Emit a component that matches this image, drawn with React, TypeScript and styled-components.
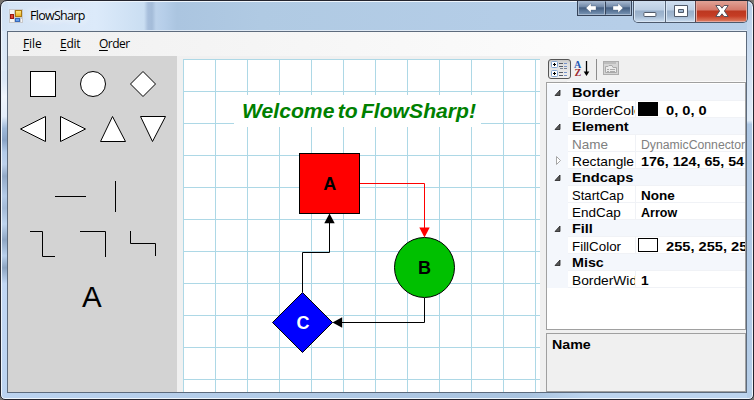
import React from "react";
import styled, { createGlobalStyle } from "styled-components";

const GlobalStyle = createGlobalStyle`
  body { margin: 0; background: #77736f; overflow: hidden; }
  * { box-sizing: border-box; }
`;

const Window = styled.div`
  width: 754px;
  height: 400px;
  display: flex;
  flex-direction: column;
  border: 1px solid #23242e;
  border-radius: 7px 7px 5px 5px;
  box-shadow: inset 0 0 0 1px #eef5fc;
  padding: 0 6px 6px;
  background:
    linear-gradient(90deg, #dfebf8, transparent) 1px 30px / 6px 40px no-repeat,
    linear-gradient(#cfe0f3 0, #dce8f7 20%, #f0f5fc 24%, #e3edfa 29%, #9fb9d9 32%, #8aa4c7 35%, #b3cbe9 38%,
      #bdd1ec 41%, #92a9c7 44%, #b4cbe8 49%, #a3bad7 52%, #bfd5ef 56%, #8ea6c4 60%, #b9d0ec 64%, #8ca4c1 67%, #c1d7f4 71%, #bbd3f0 100%) 1px 0 / 6px 100% no-repeat,
    linear-gradient(#b9cfe9 0, #d6e4f4 20%, #e0ecf8 30%, #acc6e3 31%, #b6cee8 100%) 746px 0 / 6px 100% no-repeat,
    linear-gradient(90deg, #bbd3f0, #a9c3df 70%, #bdd4ee 78%, #bdd4ee) 0 391px / 100% 8px no-repeat,
    linear-gradient(90deg, #d5e4f5 0, #dceafa 95px, #cadef2 143px, #a8bfdc 147px, #a4bcd9 151px, #bcd2eb 155px,
      #b6cee9 163px, #abc5e0 176px, #b0cae3 260px, #b4cde7 500px, #b8cfe9 100%);
`;

const TitleBar = styled.header`
  height: 30px;
  flex: none;
  display: flex;
  align-items: flex-start;
`;

const AppIcon = styled.svg`
  width: 14px;
  height: 14px;
  margin: 8px 7px 0 2px;
`;

const Title = styled.div`
  flex: 1;
  padding-top: 7px;
  font: 12px/16px "Open Sans", sans-serif;
  letter-spacing: -0.9px;
  font-size: 12.5px;
  color: #000;
  text-shadow: 0 0 8px #fff, 0 0 8px #fff;
`;

const TitleText = styled.span`
  letter-spacing: -0.72px;
`;

const NavButtons = styled.div`
  display: flex;
  border: 1px solid #36445a;
  border-top: 0;
  width: 55px;
  height: 15px;
  margin-right: 1px;
`;

const NavButton = styled.div`
  flex: 1;
  border: 1px solid #a6b8ce;
  background: linear-gradient(#9fb2cb 0, #6f87a6 42%, #435d80 48%, #7490b0 100%);
  & + & { border-left-color: #36445a; }
  svg { display: block; margin: 0 auto; }
`;

const CaptionButtons = styled.div`
  display: flex;
  width: 115px;
  height: 22px;
  margin-right: -1px;
  border: 1px solid #4c596c;
  border-top: 0;
  border-radius: 0 0 5px 5px;
  overflow: hidden;
`;

const CaptionButton = styled.div<{ $w: number; $close?: boolean }>`
  width: ${(p) => p.$w}px;
  border: 1px solid ${(p) => (p.$close ? "#e6a79c" : "#d8e5f3")};
  border-top: 0;
  background: ${(p) =>
    p.$close
      ? "linear-gradient(#e0a296 0, #d4796a 45%, #bc3720 50%, #c53c24 75%, #da765b 100%)"
      : "linear-gradient(#cfdeef 0, #bccee3 45%, #98afca 50%, #a3b9d2 75%, #c5d8ec 100%)"};
  box-shadow: ${(p) => (p.$close ? "-1px 0 #61444b" : "-1px 0 #59687c")};
  margin-left: 1px;
  &:first-child { margin-left: 0; }
  svg { display: block; margin: 0 auto; }
`;

const Client = styled.div`
  flex: 1;
  min-height: 0;
  border: 1px solid #5d6b7d;
  box-shadow: 0 -1px 0 #dfe9f4;
  background: #f0f0f0;
  display: flex;
  flex-direction: column;
`;

const MenuBar = styled.nav`
  height: 24px;
  flex: none;
  display: flex;
  padding: 4px 15px 0;
  background: linear-gradient(90deg, #f0f0f0, #fcfcfc 80%);
  font: 12px/16px "Open Sans", sans-serif;
  color: #000;
`;

const MenuItem = styled.div<{ $w: number; $track: number }>`
  width: ${(p) => p.$w}px;
  letter-spacing: ${(p) => p.$track}px;
  white-space: nowrap;
  u { text-underline-offset: 2px; text-decoration-thickness: 1px; text-decoration-skip-ink: none; }
`;

const Workspace = styled.main`
  flex: 1;
  min-height: 0;
  display: flex;
`;

const Toolbox = styled.aside`
  width: 169px;
  background: #d3d3d3;
  svg { display: block; }
`;

const Canvas = styled.section`
  width: 357px;
  margin: 3px 6px 0;
  background: #fff;
  overflow: hidden;
  svg { display: block; }
`;

const Properties = styled.aside`
  width: 200px;
  display: flex;
  flex-direction: column;
`;

const Tools = styled.div`
  height: 26px;
  flex: none;
  svg { display: block; }
`;

const Grid = styled.div`
  height: 248px;
  flex: none;
  border: 1px solid #a0a0a0;
  background: #fff;
  padding-top: 1px;
  font-family: "Liberation Sans", sans-serif;
  color: #000;
`;

const Row = styled.div<{ $header?: boolean }>`
  height: 17px;
  display: grid;
  grid-template-columns: 21px 67px 1fr;
  background: ${(p) => (p.$header ? "#f4f7fc" : "#fff")};
  border-bottom: 1px solid #f0f2f6;
`;

const Gutter = styled.div`
  background: #f4f7fc;
  height: 17px;
  svg { display: block; }
`;

const Category = styled.div`
  grid-column: 2 / 4;
  padding-left: 4px;
  font-weight: bold;
  font-size: 13.5px;
  line-height: 18px;
`;

const Label = styled.div<{ $dim?: boolean }>`
  overflow: hidden;
  white-space: nowrap;
  padding-left: 4px;
  font-size: 13.5px;
  line-height: 19px;
  height: 17px;
  color: ${(p) => (p.$dim ? "#808080" : "#000")};
`;

const Value = styled.div<{ $dim?: boolean }>`
  display: flex;
  overflow: hidden;
  height: 17px;
  border-left: 1px solid #f0f2f6;
  padding-left: ${(p) => (p.$dim ? 5 : 2)}px;
  font-size: 12.5px;
  line-height: 20px;
  white-space: pre;
  color: ${(p) => (p.$dim ? "#808080" : "#000")};
  font-weight: ${(p) => (p.$dim ? "normal" : "bold")};
`;

const Swatch = styled.span<{ $color: string }>`
  flex: none;
  width: 20px;
  height: 14px;
  margin: 1px 5px 0 0;
  border: 1px solid #000;
  background: ${(p) => p.$color};
`;

const Stretch = styled.span<{ $sx: number }>`
  display: inline-block;
  flex: none;
  transform: scaleX(${(p) => p.$sx});
  transform-origin: left center;
`;

const ValueText = styled(Stretch)`
  margin-left: 3px;
`;

const Help = styled.div`
  height: 59px;
  margin-top: 3px;
  border: 1px solid #a0a0a0;
  padding: 3px 5px;
  font: bold 13.3px/16px "Liberation Sans", sans-serif;
  color: #000;
`;

type Prop = {
  name: string;
  header?: boolean;
  sx: number;
  value?: string;
  vsx?: number;
  swatch?: string;
  dim?: boolean;
  expandable?: boolean;
};

const rows: Prop[] = [
  { name: "Border", header: true, sx: 1.08 },
  { name: "BorderColor", sx: 1.02, value: "0, 0, 0", vsx: 1.17, swatch: "#000" },
  { name: "Element", header: true, sx: 1.08 },
  { name: "Name", sx: 1, value: "DynamicConnector", vsx: 0.98, dim: true },
  { name: "Rectangle", sx: 1.02, value: "176, 124, 65, 54", vsx: 1.14, expandable: true },
  { name: "Endcaps", header: true, sx: 1.09 },
  { name: "StartCap", sx: 0.97, value: "None", vsx: 1.08 },
  { name: "EndCap", sx: 1, value: "Arrow", vsx: 1.0 },
  { name: "Fill", header: true, sx: 1.07 },
  { name: "FillColor", sx: 0.99, value: "255, 255, 255", vsx: 1.17, swatch: "#fff" },
  { name: "Misc", header: true, sx: 1.06 },
  { name: "BorderWidth", sx: 1.02, value: "1", vsx: 1.1 },
];

function PropertyRow({ row }: { row: Prop }) {
  return (
    <Row $header={row.header}>
      <Gutter>
        <svg width="21" height="17">
          {row.header && <path d="M8 11.5 L13 6 V11.5 Z" fill="#595959" stroke="#222" strokeWidth=".8" />}
          {row.expandable && <path d="M9.5 4.5 L13.5 8.5 L9.5 12.5 Z" fill="#fff" stroke="#a6a6a6" />}
        </svg>
      </Gutter>
      {row.header ? (
        <Category><Stretch $sx={row.sx}>{row.name}</Stretch></Category>
      ) : (
        <>
          <Label $dim={row.dim}><Stretch $sx={row.sx}>{row.name}</Stretch></Label>
          <Value $dim={row.dim}>
            {row.swatch && <Swatch $color={row.swatch} />}
            {row.dim ? <Stretch $sx={row.vsx!}>{row.value}</Stretch> : <ValueText $sx={row.vsx!}>{row.value}</ValueText>}
          </Value>
        </>
      )}
    </Row>
  );
}

function ToolboxShapes() {
  return (
    <svg width="169" height="336" viewBox="8 56 169 336">
      <g fill="#fff" stroke="#000">
        <rect x="30.5" y="71.5" width="25" height="25" />
        <circle cx="93" cy="84" r="12.5" />
        <path d="M143 71.5 L155.5 84 L143 96.5 L130.5 84 Z" />
        <path d="M20.5 129 L45.5 116.5 V141.5 Z" />
        <path d="M85.5 129 L60.5 116.5 V141.5 Z" />
        <path d="M112.5 116.5 L125.5 141.5 H100.5 Z" />
        <path d="M140.5 116.5 H165.5 L152.5 141.5 Z" />
      </g>
      <g fill="none" stroke="#000">
        <path d="M55 196.5 H86 M115.5 181 V212" />
        <path d="M30 231.5 H42.5 V256.5 H55" />
        <path d="M80 231.5 H105.5 V257" />
        <path d="M130.5 231 V243.5 H155.5 V256" />
      </g>
      <text x="82" y="307" fontFamily="Liberation Sans, sans-serif" fontSize="29.5">A</text>
    </svg>
  );
}

function Diagram() {
  return (
    <svg width="357" height="333" viewBox="183 59 357 333">
      <g stroke="#add8e6">
        {Array.from({ length: 12 }, (_, i) => (
          <line key={`v${i}`} x1={183.5 + i * 32} x2={183.5 + i * 32} y1="59" y2="392" />
        ))}
        {Array.from({ length: 11 }, (_, i) => (
          <line key={`h${i}`} x1="183" x2="540" y1={59.5 + i * 32} y2={59.5 + i * 32} />
        ))}
      </g>
      <rect x="234" y="95" width="247" height="32" fill="#fff" />
      <g fontFamily="Liberation Sans, sans-serif" fontWeight="bold">
        <text x="242" y="118" fontSize="20.5" fontStyle="italic" fill="#008000" wordSpacing="-2.5" textLength="234" lengthAdjust="spacingAndGlyphs">
          Welcome to FlowSharp!
        </text>
        <rect x="299.5" y="153.5" width="60" height="60" fill="#f00" stroke="#000" />
        <circle cx="424.5" cy="267.5" r="30" fill="#00c000" stroke="#000" />
        <path d="M302.5 292.5 L332.5 322.5 L302.5 352.5 L272.5 322.5 Z" fill="#00f" stroke="#000" />
        <g fontSize="18" textAnchor="middle">
          <text x="329.7" y="190">A</text>
          <text x="424.5" y="274">B</text>
          <text x="303" y="329" fill="#fff">C</text>
        </g>
      </g>
      <path d="M360 183.5 H424.5 V229" fill="none" stroke="#f00" />
      <path d="M419.3 227.5 H429.7 L424.5 237.5 Z" fill="#f00" />
      <path d="M424.5 298 V322.5 H341" fill="none" stroke="#000" />
      <path d="M342.2 317.3 V327.7 L332.5 322.5 Z" />
      <path d="M302.5 292 V252.5 H329.5 V222" fill="none" stroke="#000" />
      <path d="M324.3 223.3 H334.7 L329.5 213.5 Z" />
    </svg>
  );
}

function PropertyTools() {
  return (
    <svg width="200" height="26" viewBox="546 56 200 26">
      <defs>
        <linearGradient id="pressed" x2="0" y2="1">
          <stop stopColor="#c4c4c4" />
          <stop offset=".25" stopColor="#dedede" />
          <stop offset="1" stopColor="#f0f0f0" />
        </linearGradient>
      </defs>
      <rect x="548.5" y="59.5" width="22" height="19" rx="2.5" fill="url(#pressed)" stroke="#555" />
      {[61, 70].map((y) => (
        <g key={y}>
          <rect x="551.5" y={y + 0.5} width="6" height="6" rx="1" fill="#fff" stroke="#82a5d0" />
          <path d={`M553 ${y + 3.5} h3 M554.5 ${y + 2} v3`} stroke="#000" />
          <path d={`M559 ${y + 2.5} h4 M559 ${y + 5.5} h4`} stroke="#555c68" />
          <path d={`M564 ${y + 2.5} h3 M564 ${y + 5.5} h3`} stroke="#7794c9" />
        </g>
      ))}
      <path d="M560 68.5 h3 M564 68.5 h3" stroke="#788191" />
      <g fontFamily="Liberation Serif, serif" fontWeight="bold" fontSize="10">
        <text x="574" y="68" fill="#2257b5">A</text>
        <text x="574.5" y="76.3" fill="#9e2a2f">Z</text>
      </g>
      <path d="M586.5 61 V74" stroke="#000" strokeWidth="1.3" />
      <path d="M583.7 71.5 H589.3 L586.5 76 Z" />
      <path d="M596.5 59 V80" stroke="#8d8d8d" />
      <rect x="603.5" y="61.5" width="15" height="13" fill="#d5d5d5" stroke="#adadad" />
      <path d="M604 63 H616" stroke="#bdbdbd" strokeWidth="2" />
      <path d="M605.5 66.5 H608 L609 65.5 H612 L613 67.5 H616.5 V72.5 H605.5 Z" fill="#ebebeb" stroke="#aaa" />
      <path d="M607 69.5 H609 M610 69.5 H615 M607 71.5 H609 M610 71.5 H615" stroke="#aaa" />
      <path d="M567 81.5 H746" stroke="#fafafa" />
    </svg>
  );
}

export default function App() {
  return (
    <>
      <GlobalStyle />
      <Window>
        <TitleBar>
          <AppIcon viewBox="0 0 14 14">
            <defs>
              <linearGradient id="gold" x2="0" y2="1"><stop stopColor="#ffe989" /><stop offset="1" stopColor="#e9ad17" /></linearGradient>
            </defs>
            <rect width="14" height="14" fill="#c8c9cc" />
            <path d="M1 1h4v4H1z M1 10h4v3H1z M12 10h1v3h-1z" fill="#f5f5f5" />
            <rect x="6.5" y="1.5" width="6" height="6" fill="url(#gold)" stroke="#aa7810" />
            <rect x="1.5" y="5.5" width="3" height="4" fill="#df4534" stroke="#9b1a12" />
            <rect x="6.5" y="9.5" width="4" height="3" fill="#65a0ee" stroke="#3768b9" />
          </AppIcon>
          <Title><TitleText>FlowSharp</TitleText></Title>
          <NavButtons>
            <NavButton>
              <svg width="14" height="12"><path d="M2 6 L7 1.3 V4 H12 V8 H7 V10.7 Z" fill="#fff" stroke="#3c506c" strokeWidth=".3" /></svg>
            </NavButton>
            <NavButton>
              <svg width="14" height="12"><path d="M12 6 L7 1.3 V4 H2 V8 H7 V10.7 Z" fill="#fff" stroke="#3c506c" strokeWidth=".3" /></svg>
            </NavButton>
          </NavButtons>
          <CaptionButtons>
            <CaptionButton $w={31}>
              <svg width="14" height="20"><rect x=".9" y="11.5" width="12" height="4" rx=".7" fill="#fff" stroke="#505a6a" /></svg>
            </CaptionButton>
            <CaptionButton $w={29}>
              <svg width="14" height="20">
                <path fillRule="evenodd" d="M.5 4.5 H13.5 V15.5 H.5 Z M4.5 8.5 H9.5 V11.5 H4.5 Z" fill="#fff" stroke="#505a6a" />
              </svg>
            </CaptionButton>
            <CaptionButton $w={51} $close>
              <svg width="14" height="20">
                <path d="M.8 4.5 H5 L7 7.2 L9 4.5 H13.2 L9.4 10 L13.2 15.5 H9 L7 12.8 L5 15.5 H.8 L4.6 10 Z" fill="#fff" stroke="#58545e" />
              </svg>
            </CaptionButton>
          </CaptionButtons>
        </TitleBar>
        <Client>
          <MenuBar>
            <MenuItem $w={37} $track={-0.1}><u>F</u>ile</MenuItem>
            <MenuItem $w={39} $track={-0.3}><u>E</u>dit</MenuItem>
            <MenuItem $w={40} $track={-0.5}><u>O</u>rder</MenuItem>
          </MenuBar>
          <Workspace>
            <Toolbox><ToolboxShapes /></Toolbox>
            <Canvas><Diagram /></Canvas>
            <Properties>
              <Tools><PropertyTools /></Tools>
              <Grid>
                {rows.map((row) => <PropertyRow key={row.name} row={row} />)}
              </Grid>
              <Help><Stretch $sx={1.07}>Name</Stretch></Help>
            </Properties>
          </Workspace>
        </Client>
      </Window>
    </>
  );
}
